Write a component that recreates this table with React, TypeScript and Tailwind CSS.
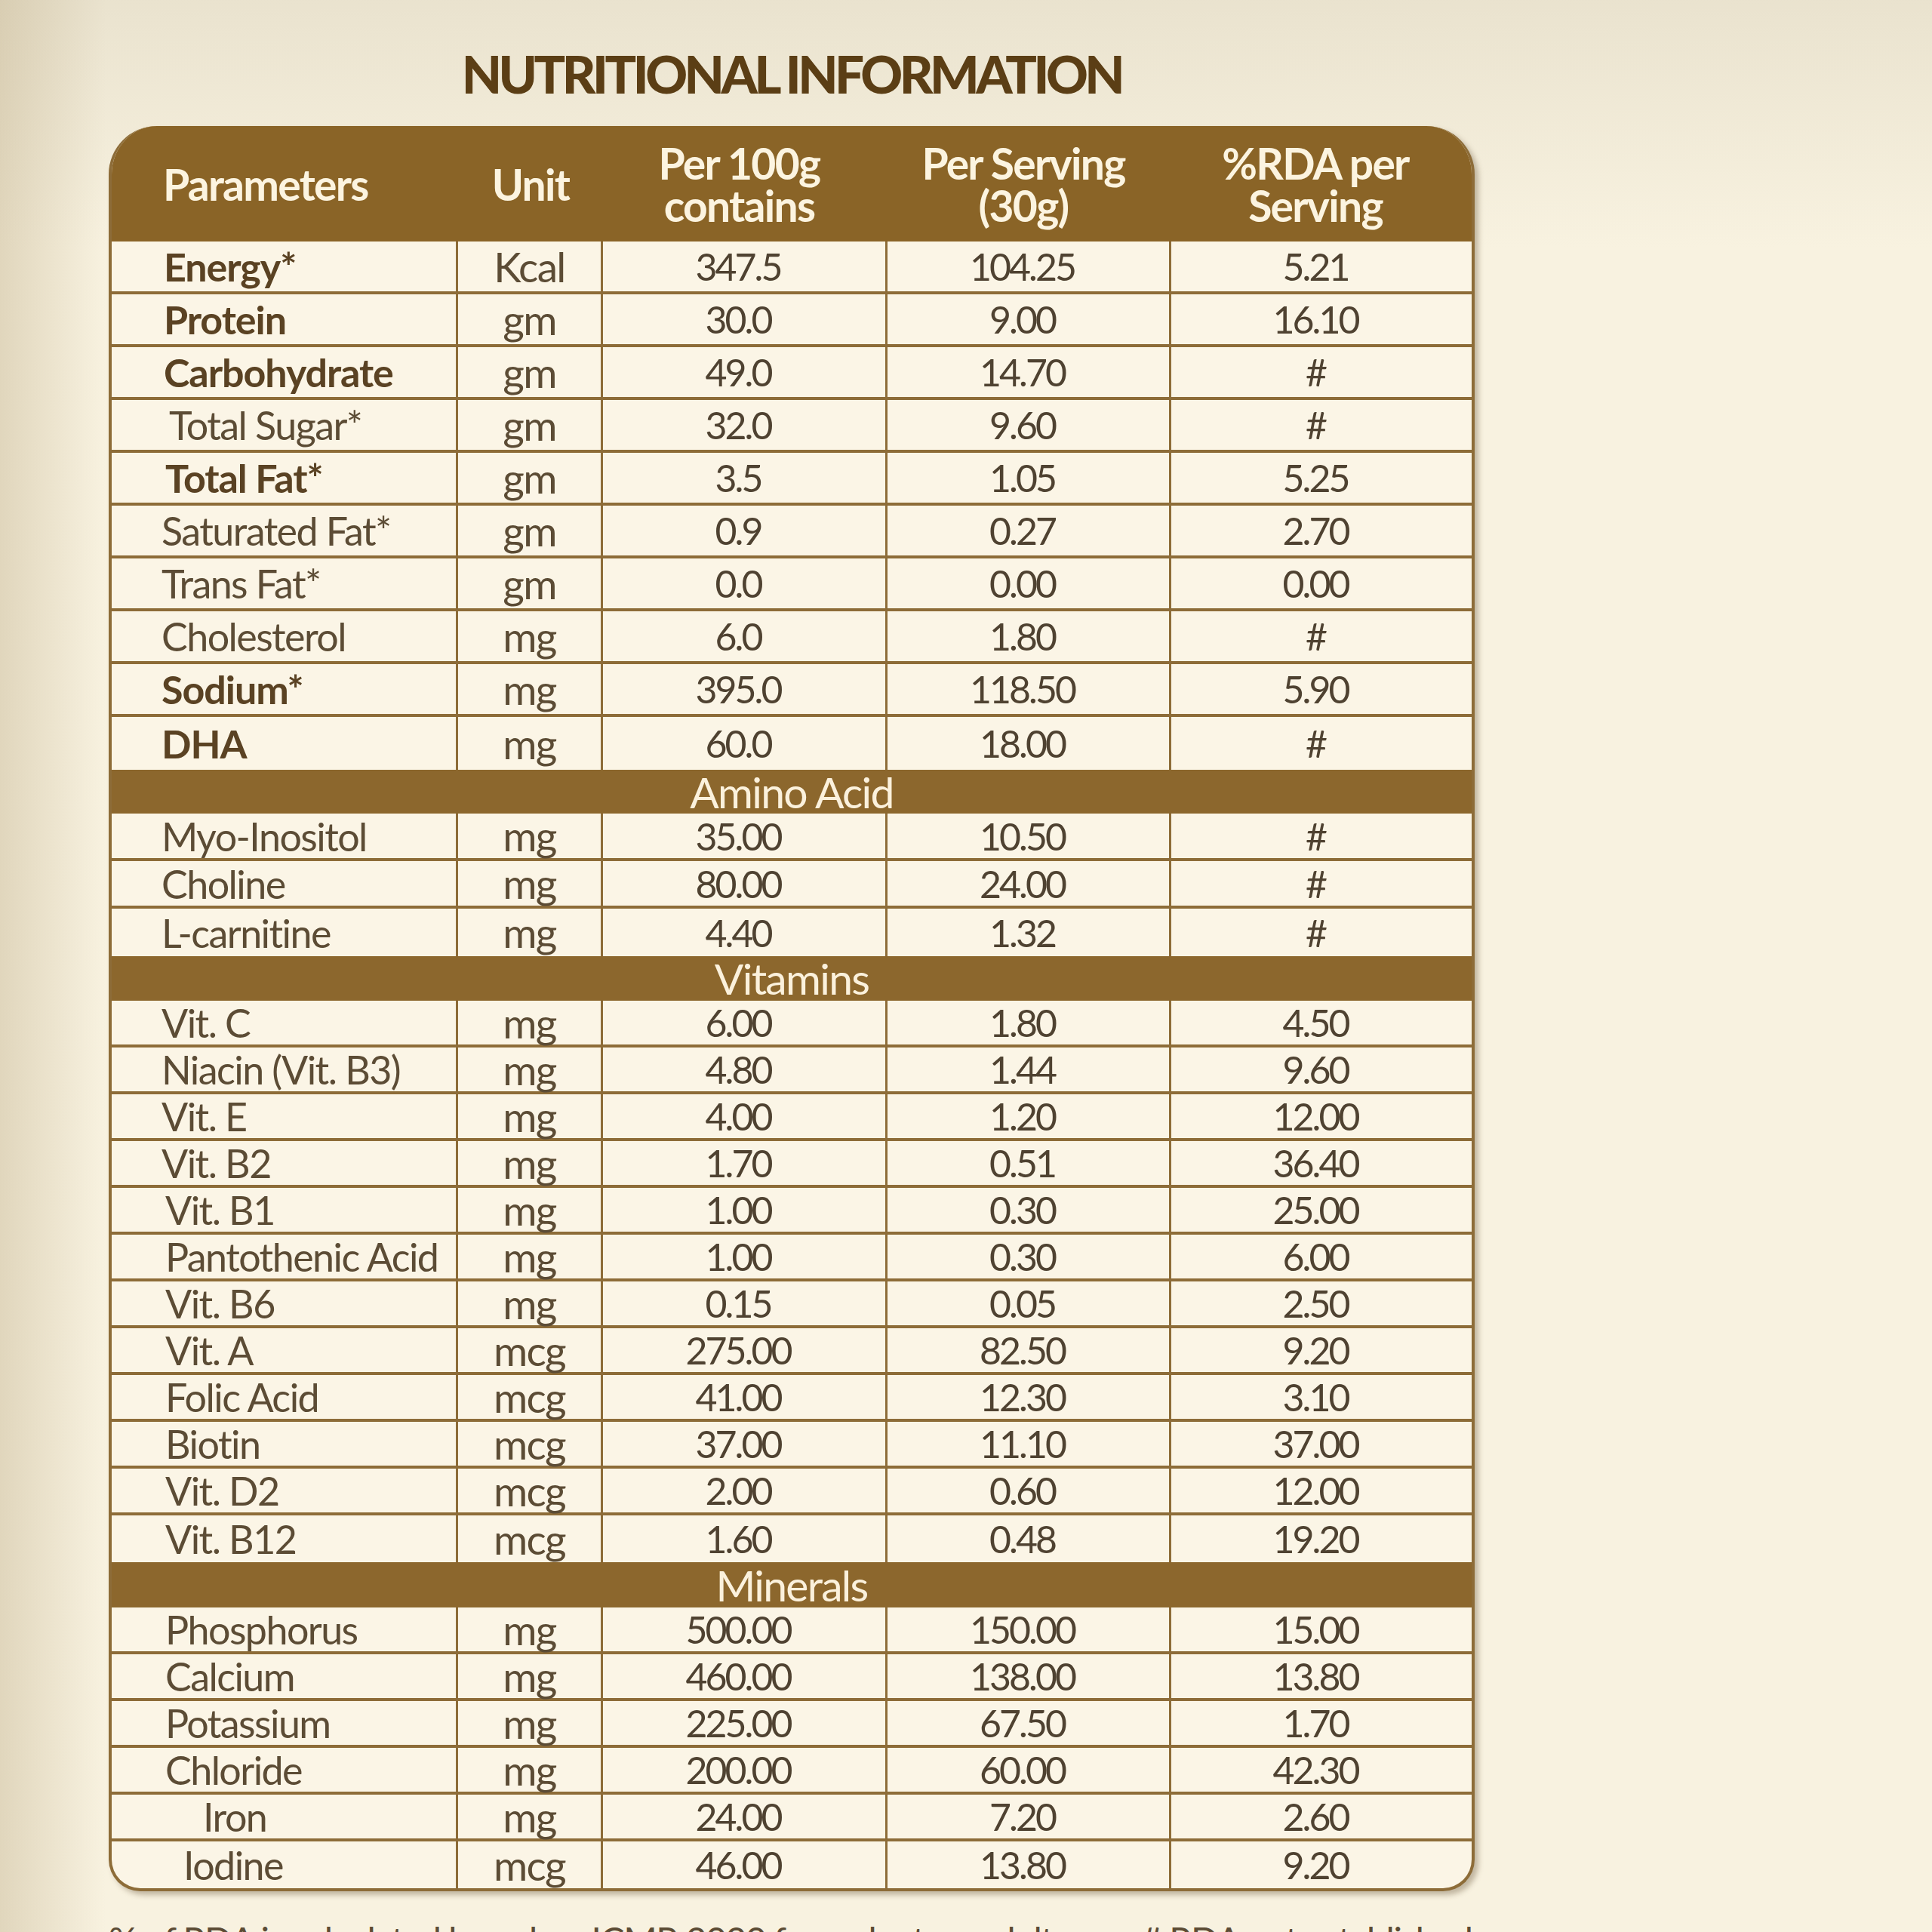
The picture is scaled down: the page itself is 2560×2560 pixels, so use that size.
type Row = {
  name: string;
  unit: string;
  per100: string;
  serving: string;
  rda: string;
  bold?: boolean;
  indent: string;
};

type Section = {
  title?: string;
  bandHeight: string;
  rowHeight: string;
  rows: Row[];
};

const sections: Section[] = [
  {
    bandHeight: "",
    rowHeight: "h-[70px]",
    rows: [
      { name: "Energy*", unit: "Kcal", per100: "347.5", serving: "104.25", rda: "5.21", bold: true, indent: "pl-[69px]" },
      { name: "Protein", unit: "gm", per100: "30.0", serving: "9.00", rda: "16.10", bold: true, indent: "pl-[69px]" },
      { name: "Carbohydrate", unit: "gm", per100: "49.0", serving: "14.70", rda: "#", bold: true, indent: "pl-[69px]" },
      { name: "Total Sugar*", unit: "gm", per100: "32.0", serving: "9.60", rda: "#", indent: "pl-[76px]" },
      { name: "Total Fat*", unit: "gm", per100: "3.5", serving: "1.05", rda: "5.25", bold: true, indent: "pl-[71px]" },
      { name: "Saturated Fat*", unit: "gm", per100: "0.9", serving: "0.27", rda: "2.70", indent: "pl-[66px]" },
      { name: "Trans Fat*", unit: "gm", per100: "0.0", serving: "0.00", rda: "0.00", indent: "pl-[66px]" },
      { name: "Cholesterol", unit: "mg", per100: "6.0", serving: "1.80", rda: "#", indent: "pl-[66px]" },
      { name: "Sodium*", unit: "mg", per100: "395.0", serving: "118.50", rda: "5.90", bold: true, indent: "pl-[66px]" },
      { name: "DHA", unit: "mg", per100: "60.0", serving: "18.00", rda: "#", bold: true, indent: "pl-[66px]" },
    ],
  },
  {
    title: "Amino Acid",
    bandHeight: "h-[58px]",
    rowHeight: "h-[63px]",
    rows: [
      { name: "Myo-Inositol", unit: "mg", per100: "35.00", serving: "10.50", rda: "#", indent: "pl-[66px]" },
      { name: "Choline", unit: "mg", per100: "80.00", serving: "24.00", rda: "#", indent: "pl-[66px]" },
      { name: "L-carnitine", unit: "mg", per100: "4.40", serving: "1.32", rda: "#", indent: "pl-[66px]" },
    ],
  },
  {
    title: "Vitamins",
    bandHeight: "h-[59px]",
    rowHeight: "h-[62px]",
    rows: [
      { name: "Vit. C", unit: "mg", per100: "6.00", serving: "1.80", rda: "4.50", indent: "pl-[66px]" },
      { name: "Niacin (Vit. B3)", unit: "mg", per100: "4.80", serving: "1.44", rda: "9.60", indent: "pl-[66px]" },
      { name: "Vit. E", unit: "mg", per100: "4.00", serving: "1.20", rda: "12.00", indent: "pl-[66px]" },
      { name: "Vit. B2", unit: "mg", per100: "1.70", serving: "0.51", rda: "36.40", indent: "pl-[66px]" },
      { name: "Vit. B1", unit: "mg", per100: "1.00", serving: "0.30", rda: "25.00", indent: "pl-[71px]" },
      { name: "Pantothenic Acid", unit: "mg", per100: "1.00", serving: "0.30", rda: "6.00", indent: "pl-[71px]" },
      { name: "Vit. B6", unit: "mg", per100: "0.15", serving: "0.05", rda: "2.50", indent: "pl-[71px]" },
      { name: "Vit. A", unit: "mcg", per100: "275.00", serving: "82.50", rda: "9.20", indent: "pl-[71px]" },
      { name: "Folic Acid", unit: "mcg", per100: "41.00", serving: "12.30", rda: "3.10", indent: "pl-[71px]" },
      { name: "Biotin", unit: "mcg", per100: "37.00", serving: "11.10", rda: "37.00", indent: "pl-[71px]" },
      { name: "Vit. D2", unit: "mcg", per100: "2.00", serving: "0.60", rda: "12.00", indent: "pl-[71px]" },
      { name: "Vit. B12", unit: "mcg", per100: "1.60", serving: "0.48", rda: "19.20", indent: "pl-[71px]" },
    ],
  },
  {
    title: "Minerals",
    bandHeight: "h-[60px]",
    rowHeight: "h-[62px]",
    rows: [
      { name: "Phosphorus", unit: "mg", per100: "500.00", serving: "150.00", rda: "15.00", indent: "pl-[71px]" },
      { name: "Calcium", unit: "mg", per100: "460.00", serving: "138.00", rda: "13.80", indent: "pl-[71px]" },
      { name: "Potassium", unit: "mg", per100: "225.00", serving: "67.50", rda: "1.70", indent: "pl-[71px]" },
      { name: "Chloride", unit: "mg", per100: "200.00", serving: "60.00", rda: "42.30", indent: "pl-[71px]" },
      { name: "Iron", unit: "mg", per100: "24.00", serving: "7.20", rda: "2.60", indent: "pl-[121px]" },
      { name: "Iodine", unit: "mcg", per100: "46.00", serving: "13.80", rda: "9.20", indent: "pl-[95px]" },
    ],
  },
];

const cols = "grid grid-cols-[459px_192px_377px_376px_398px]";
const valueCell = "flex items-center justify-center pr-[16px] text-[50px] leading-none text-[#4f4231] tracking-[-0.06em]";

function DataRow({ row, height, last }: { row: Row; height: string; last: boolean }) {
  return (
    <div className={`${cols} ${height} ${last ? "" : "border-b-[4px]"} border-[#8d6c38]`}>
      <div
        className={`flex items-center border-r-[3px] border-[#8d6c38] ${row.indent} text-[52px] leading-none ${
          row.bold ? "font-bold text-[#5a4223] tracking-[-0.02em]" : "font-normal text-[#5c4c35] tracking-[-0.03em]"
        }`}
      >
        {row.name}
      </div>
      <div className="flex items-center justify-center border-r-[3px] border-[#8d6c38] text-[55px] leading-none text-[#5c4c35] tracking-[-0.03em]">
        {row.unit}
      </div>
      <div className={`${valueCell} border-r-[3px] border-[#8d6c38]`}>{row.per100}</div>
      <div className={`${valueCell} border-r-[3px] border-[#8d6c38]`}>{row.serving}</div>
      <div className={valueCell}>{row.rda}</div>
    </div>
  );
}

export default function App() {
  return (
    <div
      className="relative h-[2560px] w-[2560px] overflow-hidden bg-[#f8f2e0] bg-[linear-gradient(to_right,rgba(196,180,145,0.45),rgba(196,180,145,0)_140px),linear-gradient(to_bottom,rgba(222,214,192,0.55),rgba(222,214,192,0)_330px)]"
      style={{ fontFamily: "Lato, 'Open Sans', sans-serif" }}
    >
      <div className="ml-[144px] w-[1810px] pt-[63px]">
        <h1 className="text-center text-[69px] font-black leading-[70px] tracking-[-0.065em] text-[#5b3e15]">
          NUTRITIONAL INFORMATION
        </h1>

        <div className="mt-[34px] overflow-hidden rounded-t-[64px] rounded-b-[42px] border-x-[4px] border-b-[4px] border-[#8d6c38] bg-[#fbf5e6] shadow-[5px_5px_7px_rgba(90,70,40,0.35)]">
          <div className={`${cols} h-[153px] bg-[#8a6427] text-[#fcf4e0] font-bold text-[57px] leading-[56px] tracking-[-0.03em]`}>
            <div className="flex items-center pl-[68px]">Parameters</div>
            <div className="flex items-center justify-center">Unit</div>
            <div className="flex flex-col items-center justify-center pr-[16px]">
              <span>Per 100g</span>
              <span>contains</span>
            </div>
            <div className="flex flex-col items-center justify-center pr-[16px]">
              <span>Per Serving</span>
              <span>(30g)</span>
            </div>
            <div className="flex flex-col items-center justify-center pr-[16px]">
              <span>%RDA per</span>
              <span>Serving</span>
            </div>
          </div>

          {sections.map((section, si) => (
            <div key={si}>
              {section.title && (
                <div
                  className={`flex ${section.bandHeight} items-center justify-center bg-[#8c672d] text-[57px] font-normal leading-none tracking-[-0.03em] text-[#fbf1dc]`}
                >
                  {section.title}
                </div>
              )}
              {section.rows.map((row, ri) => (
                <DataRow
                  key={row.name}
                  row={row}
                  height={section.rowHeight}
                  last={ri === section.rows.length - 1}
                />
              ))}
            </div>
          ))}
        </div>

        <p className="mt-[40px] whitespace-nowrap text-[48px] leading-[50px] tracking-[-0.03em] text-[#5c4c35]">
          % of RDA is calculated based on ICMR 2020 for sedentary adult man, # RDA not established
        </p>
      </div>
    </div>
  );
}
